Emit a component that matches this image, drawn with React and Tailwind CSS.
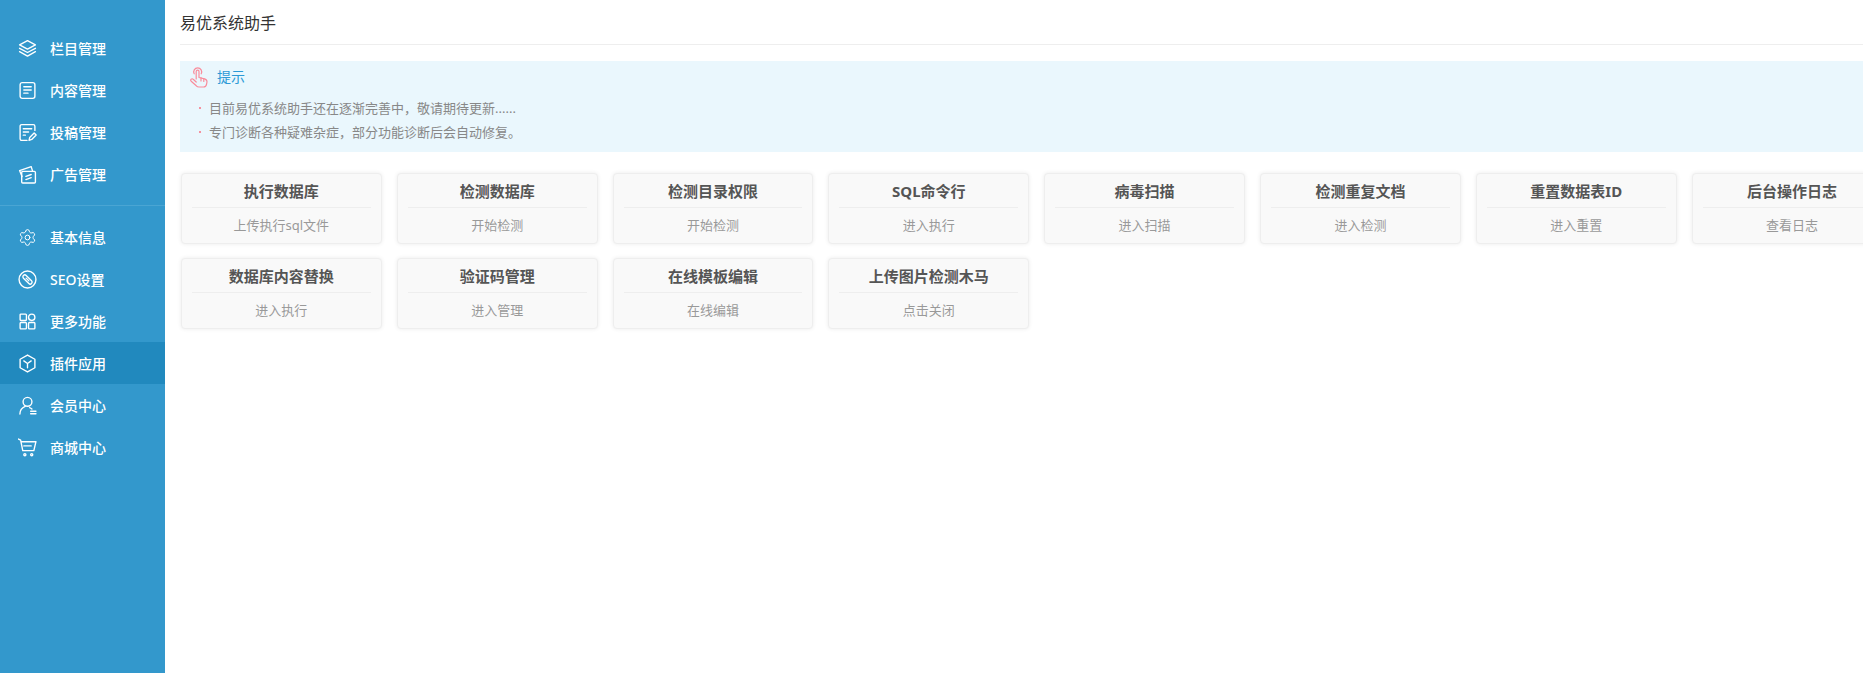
import React from 'react';
import { Settings } from 'lucide-react';

const FONT = { fontFamily: '"Noto Sans", "Noto Sans CJK SC", sans-serif' };

// sidebar icons, all on an 18x18 box
const Icon = ({ children }) => (
  <svg width="19" height="19" viewBox="0 0 18 18" fill="none" stroke="currentColor" strokeWidth="1.3" strokeLinecap="round" strokeLinejoin="round" className="flex-none">
    {children}
  </svg>
);

const icons = {
  layers: (
    <Icon>
      <path d="M9 1.500 16.500 5.500 9 9.500 1.500 5.500Z" />
      <path d="M1.500 8.800 9 12.800 16.500 8.800" />
      <path d="M1.500 12 9 16.200 16.500 12" />
    </Icon>
  ),
  content: (
    <Icon>
      <rect x="2" y="1.500" width="14" height="15" rx="2" />
      <path d="M5.500 5.500h7M5.500 8.500h7M5.500 11.500h4" />
    </Icon>
  ),
  post: (
    <Icon>
      <path d="M8.500 16.500H3.500A1.500 1.500 0 0 1 2 15V3A1.500 1.500 0 0 1 3.500 1.500h11A1.500 1.500 0 0 1 16 3v4" />
      <path d="M5 5.500h8M5 8.500h5M5 11.500h2" />
      <path d="M10.500 16.500l.6-2.800 4.200-4.300 1.900 1.900-4.200 4.300Z" />
    </Icon>
  ),
  ad: (
    <Icon>
      <rect x="3.500" y="6" width="13" height="11" rx="1" />
      <path d="M3.800 11 1.500 5.300 12.500 1.500l1.300 4.300" />
      <path d="M7.500 10.800l5-1.800M7.500 13.800l5-1.800" />
    </Icon>
  ),
  gear: <Settings size={19} strokeWidth={1.25} className="flex-none" />,
  seo: (
    <Icon>
      <circle cx="9" cy="9" r="8" />
      <rect x="3.600" y="7.200" width="10.800" height="3.600" rx="1.800" transform="rotate(45 9 9)" />
      <path d="M7.700 7.700l2.600 2.600" />
    </Icon>
  ),
  grid: (
    <Icon>
      <rect x="2" y="2" width="6" height="6" rx="0.800" />
      <rect x="10" y="2" width="6" height="6" rx="3" />
      <rect x="2" y="10" width="6" height="6" rx="0.800" />
      <rect x="10" y="10" width="6" height="6" rx="0.800" />
    </Icon>
  ),
  box: (
    <Icon>
      <path d="M9 1 16 5v8l-7 4-7-4V5Z" />
      <path d="M5.500 6.500 9 9l3.500-2.500M9 9v4" />
    </Icon>
  ),
  member: (
    <Icon>
      <circle cx="9" cy="5.500" r="4.200" />
      <path d="M1.800 17c0-3.500 2.200-6 5-7.200" />
      <path d="M11 11c.9.300 1.600.800 2.200 1.400" />
      <path d="M12 14.500h5M12 16.800h5" />
    </Icon>
  ),
  cart: (
    <Icon>
      <path d="M.500 1 2.500 2l2 10h10.500l2-8.500H3" />
      <path d="M5.500 7.500h7" />
      <circle cx="6.500" cy="15.800" r="1" />
      <circle cx="13" cy="15.800" r="1" />
    </Icon>
  ),
};

const menuTop = [
  { name: '栏目管理', icon: 'layers' },
  { name: '内容管理', icon: 'content' },
  { name: '投稿管理', icon: 'post' },
  { name: '广告管理', icon: 'ad' },
];

const menuBottom = [
  { name: '基本信息', icon: 'gear' },
  { name: 'SEO设置', icon: 'seo' },
  { name: '更多功能', icon: 'grid' },
  { name: '插件应用', icon: 'box', active: true },
  { name: '会员中心', icon: 'member' },
  { name: '商城中心', icon: 'cart' },
];

const tools = [
  ['执行数据库', '上传执行sql文件'],
  ['检测数据库', '开始检测'],
  ['检测目录权限', '开始检测'],
  ['SQL命令行', '进入执行'],
  ['病毒扫描', '进入扫描'],
  ['检测重复文档', '进入检测'],
  ['重置数据表ID', '进入重置'],
  ['后台操作日志', '查看日志'],
  ['数据库内容替换', '进入执行'],
  ['验证码管理', '进入管理'],
  ['在线模板编辑', '在线编辑'],
  ['上传图片检测木马', '点击关闭'],
];

function MenuItem({ item }) {
  return (
    <a className={`flex h-[42px] items-center gap-[13px] pl-[18px] pt-[1px] text-[14px] font-medium text-white ${item.active ? 'bg-[#2189be]' : ''}`}>
      {icons[item.icon]}
      <span>{item.name}</span>
    </a>
  );
}

function ToolCard({ title, sub }) {
  return (
    <div className="h-[71px] rounded-[4px] border border-[#eeeeee] bg-[#f9f9f9] px-[10px] text-center shadow-[0_0_4px_rgba(0,0,0,0.08)]">
      <div className="h-[34px] border-b border-[#eeeeee] text-[15px] leading-[35px] font-bold text-[#555555]">{title}</div>
      <div className="text-[13px] leading-[34px] text-[#999999]">{sub}</div>
    </div>
  );
}

export default function App() {
  return (
    <div className="flex h-screen w-full overflow-hidden bg-white" style={FONT}>
      <aside className="w-[165px] flex-none bg-[#3398cc] pt-[27px]">
        {menuTop.map((item) => <MenuItem key={item.name} item={item} />)}
        <div className="my-[10px] border-t border-[#4aa5d3]" />
        {menuBottom.map((item) => <MenuItem key={item.name} item={item} />)}
      </aside>

      <main className="min-w-0 flex-1 overflow-hidden pl-[15px]">
        <div className="h-[45px] border-b border-[#eeeeee] text-[16px] leading-[47px] text-[#333333]">易优系统助手</div>

        <div className="mt-[16px] h-[91px] bg-[#eaf7fd] pl-[10px]">
          <div className="flex h-[30px] items-center gap-[9px]">
            <svg width="18" height="21" viewBox="0 0 18 21" fill="none" stroke="#f98c9b" strokeWidth="1.2" strokeLinecap="round" strokeLinejoin="round" className="mt-[2px] flex-none">
              <path d="M4.200 6.800a4 4 0 1 1 7 0" />
              <path d="M6.200 12V4.600a1.400 1.400 0 0 1 2.800 0V10.500l5.500 1.300c1.500.4 2.500 1.400 2.500 3l-.5 2.600a3 3 0 0 1-3 2.600H9a3.500 3.500 0 0 1-2.700-1.200L1.200 14.200a1.400 1.400 0 0 1 2-2L6.200 15" />
              <path d="M11 10.500v3.500M13.800 11.500v3" />
            </svg>
            <span className="text-[14px] text-[#2d9ad6]">提示</span>
          </div>
          <ul className="mt-[5px] text-[13px] leading-[24px] text-[#888888]">
            {['目前易优系统助手还在逐渐完善中，敬请期待更新......', '专门诊断各种疑难杂症，部分功能诊断后会自动修复。'].map((text) => (
              <li key={text} className="flex items-center gap-[8px] pl-[9px]">
                <span className="h-[2px] w-[2px] flex-none rounded-full bg-[#f9707f]" />
                {text}
              </li>
            ))}
          </ul>
        </div>

        <div className="mt-[21px] ml-[0.9px] grid w-max grid-cols-[repeat(8,200.83px)] gap-x-[15px] gap-y-[14px]">
          {tools.map(([title, sub]) => <ToolCard key={title} title={title} sub={sub} />)}
        </div>
      </main>
    </div>
  );
}
